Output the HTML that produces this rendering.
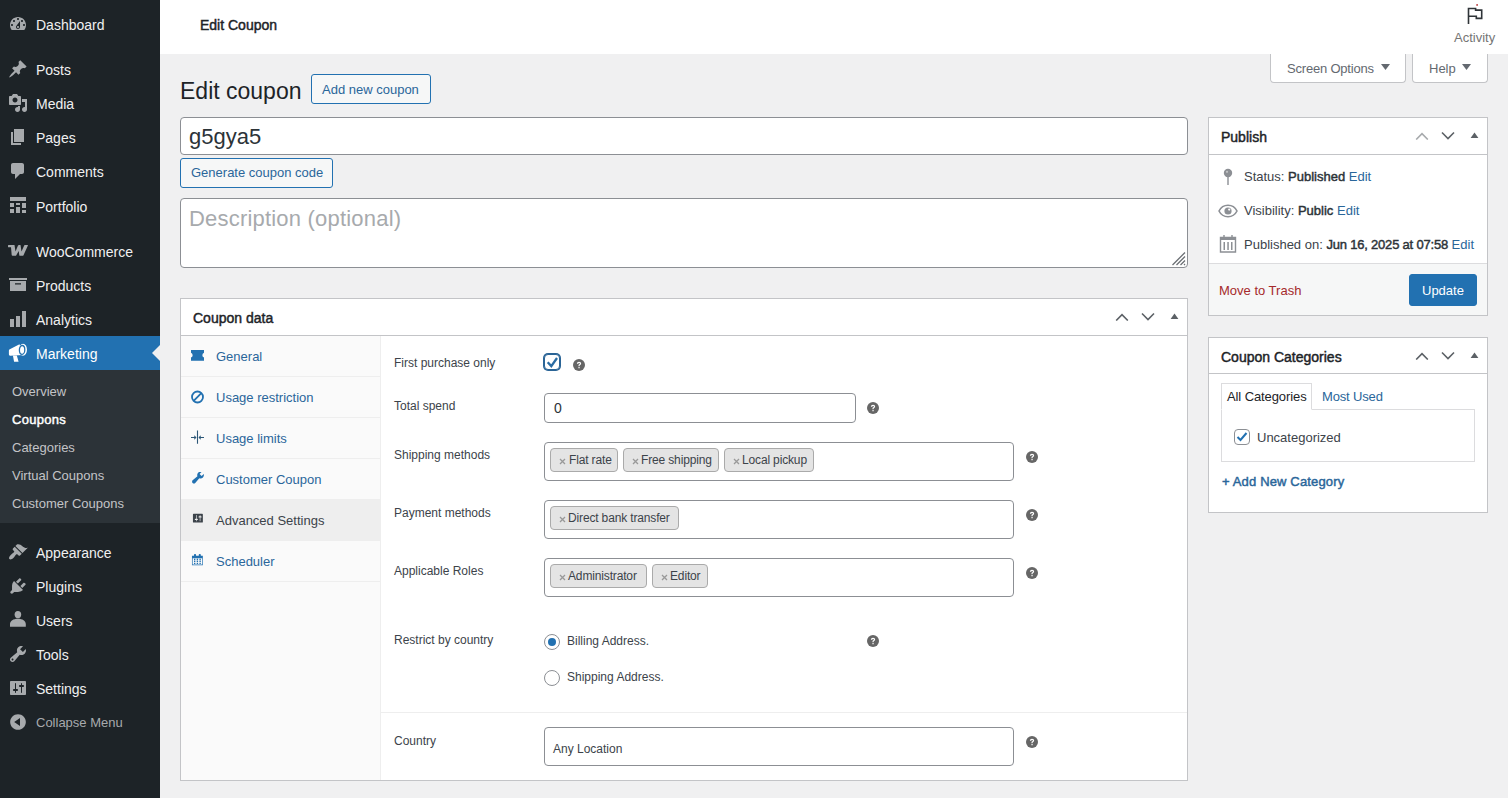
<!DOCTYPE html>
<html><head><meta charset="utf-8">
<style>
*{box-sizing:border-box;margin:0;padding:0}
html,body{width:1508px;height:798px;overflow:hidden;background:#f0f0f1;font-family:"Liberation Sans",sans-serif;color:#3c434a;font-size:13px}
.abs{position:absolute;white-space:nowrap}
#side{position:absolute;left:0;top:0;width:160px;height:798px;background:#1d2327}
.mi{position:absolute;left:0;width:160px;height:34px;color:#f0f0f1;font-size:14px;line-height:34px}
.mi span{position:absolute;left:36px;top:1px;white-space:nowrap}
.mi svg{position:absolute;left:8px;top:7px;width:20px;height:20px;fill:#a7aaad}
.mi.cur{background:#2271b1;color:#fff}
.mi.cur svg{fill:#fff}
#sub{position:absolute;left:0;top:370px;width:160px;height:153px;background:#2c3338}
.si{position:absolute;left:12px;font-size:13px;color:#c3c4c7;line-height:18px;white-space:nowrap}
#hdr{position:absolute;left:160px;top:0;width:1348px;height:54px;background:#fff}
a{color:#2a669a;text-decoration:none}
.btn2{position:absolute;border:1px solid #2271b1;border-radius:3px;background:#f6f7f7;color:#2a669a;font-size:13px;white-space:nowrap}
.btn2 span{position:absolute}
.inp{position:absolute;border:1px solid #8c8f94;border-radius:4px;background:#fff}
.pbox{position:absolute;border:1px solid #c3c4c7;background:#fff}
.pbox .ph{position:absolute;left:0;top:0;right:0;border-bottom:1px solid #c3c4c7}
.ptitle{position:absolute;font-size:14px;font-weight:normal;color:#1d2327;white-space:nowrap;-webkit-text-stroke:0.45px #1d2327}
.lbl{position:absolute;left:394px;font-size:12px;color:#3c434a;white-space:nowrap}
.help{position:absolute;width:12px;height:12px;margin:0.5px 0 0 0.5px}
.chip{position:absolute;height:24px;background:#e4e4e4;border:1px solid #aaa;border-radius:4px}
.chip i{position:absolute;top:6px;width:7px;height:7px}
.chip span{position:absolute;top:4px;font-size:12px;color:#3c434a;white-space:nowrap;letter-spacing:-0.15px}
.tab{position:absolute;left:181px;width:199px;height:41px;border-bottom:1px solid #eee;font-size:13px}
.tab span{position:absolute;left:35px;top:13px;color:#2a669a;white-space:nowrap}
.tab svg{position:absolute;left:10px;top:13px;width:14px;height:14px;fill:#2271b1}
.arr{position:absolute;width:14px;height:9px}
b{font-weight:normal;color:#2c3338;-webkit-text-stroke:0.45px #2c3338}
</style></head><body>

<div id="side">
  <div class="mi" style="top:7px"><svg viewBox="0 0 20 20"><path d="M3.76 16h12.48c1.1-1.37 1.76-3.11 1.76-5 0-4.42-3.58-8-8-8s-8 3.58-8 8c0 1.89.66 3.63 1.76 5zM10 4c.55 0 1 .45 1 1s-.45 1-1 1-1-.45-1-1 .45-1 1-1zM6 6c.55 0 1 .45 1 1s-.45 1-1 1-1-.45-1-1 .45-1 1-1zm8 0c.55 0 1 .45 1 1s-.45 1-1 1-1-.45-1-1 .45-1 1-1zm-5.37 5.55L12 7v6c0 1.1-.9 2-2 2s-2-.9-2-2c0-.57.24-1.08.63-1.45zM4 10c.55 0 1 .45 1 1s-.45 1-1 1-1-.45-1-1 .45-1 1-1zm12 0c.55 0 1 .45 1 1s-.45 1-1 1-1-.45-1-1 .45-1 1-1zm-5 3c0-.55-.45-1-1-1s-1 .45-1 1 .45 1 1 1 1-.45 1-1z"/></svg><span>Dashboard</span></div>
  <div class="mi" style="top:52px"><svg viewBox="0 0 20 20"><path d="M10.44 3.02l1.82-1.82 6.36 6.35-1.83 1.82c-1.05-.68-2.48-.57-3.410.36l-.75.75c-.92.93-1.04 2.35-.35 3.41l-1.83 1.82-2.41-2.41-2.8 2.79c-.42.42-3.38 2.71-3.8 2.29s1.86-3.39 2.28-3.81l2.79-2.79L4.1 9.36l1.83-1.82c1.05.69 2.48.57 3.4-.36l.75-.75c.93-.92 1.05-2.35.36-3.41z"/></svg><span>Posts</span></div>
  <div class="mi" style="top:86px"><svg viewBox="0 0 20 20"><path d="M13 11V4c0-.55-.45-1-1-1h-1.67L9 1H5L3.67 3H2c-.55 0-1 .45-1 1v7c0 .55.45 1 1 1h10c.55 0 1-.45 1-1zM7 4.5c1.38 0 2.5 1.12 2.5 2.5S8.38 9.5 7 9.5 4.5 8.38 4.5 7 5.62 4.5 7 4.5zM14 6h5v10.5c0 1.38-1.12 2.5-2.5 2.5S14 17.88 14 16.5s1.12-2.5 2.5-2.5c.17 0 .34.02.5.05V9h-3V6zm-4 8.05V13h2v3.5c0 1.38-1.12 2.5-2.5 2.5S7 17.88 7 16.5 8.12 14 9.5 14c.17 0 .34.02.5.05z"/></svg><span>Media</span></div>
  <div class="mi" style="top:120px"><svg viewBox="0 0 20 20"><path d="M6 15V2h10v13H6zm-1 1h8v2H3V5h2v11z"/></svg><span>Pages</span></div>
  <div class="mi" style="top:154px"><svg viewBox="0 0 20 20"><path d="M5 2h9c1.1 0 2 .9 2 2v7c0 1.1-.9 2-2 2h-2l-5 5v-5H5c-1.1 0-2-.9-2-2V4c0-1.1.9-2 2-2z"/></svg><span>Comments</span></div>
  <div class="mi" style="top:189px"><svg viewBox="0 0 20 20"><path d="M2 1h16v4H2zM2 7h4v4H2zm0 6h4v4H2zM8 7h4v2H8zm0 4h4v6H8zM14 7h4v5h-4zm0 7h4v3h-4z"/></svg><span>Portfolio</span></div>
  <div class="mi" style="top:234px"><svg viewBox="0 0 20 20"><path d="M0 4.500Q0 3.900 .600 3.900H6.500L7.500 10.500L10 4.500Q10.300 3.900 11 3.900H12.500L13.500 10.500L16.300 4.300Q16.500 3.900 17 3.900H19.500Q20.200 3.900 19.900 4.600L15.500 14.200Q15.200 14.800 14.500 14.800H12Q11.400 14.800 11.300 14.200L10.700 10L8.300 14.200Q8 14.800 7.300 14.800H4.600Q3.800 14.800 3.700 14L3 6.300H.600Q0 6.300 0 5.700Z"/></svg><span>WooCommerce</span></div>
  <div class="mi" style="top:268px"><svg viewBox="0 0 20 20" style="fill-rule:evenodd"><path d="M1 3h18v2H1zM2 6h16v10H2zM7 8.3v1.2h6V8.300z"/></svg><span>Products</span></div>
  <div class="mi" style="top:302px"><svg viewBox="0 0 20 20"><path d="M2 10h4v8H2zM8 7h4v11H8zM14 2h4v16h-4z"/></svg><span>Analytics</span></div>
  <div class="mi cur" style="top:336px"><svg viewBox="0 0 20 20"><path d="M1.800 6.300L11.500 1.300L14.800 12.100L2.200 12.700C1.200 12.700 .900 12 .900 11V7.600C.900 7 1.200 6.600 1.800 6.300Z"/><path d="M4.900 12.500H8.800L10.600 18.800H6.100Z"/><ellipse cx="15" cy="6.800" rx="4" ry="6"/><ellipse cx="14.100" cy="6.900" rx="2.700" ry="4.400" fill="#fff" stroke="#2271b1" stroke-width="1.300"/></svg><span>Marketing</span></div>
  <div class="abs" style="left:152px;top:345px;width:0;height:0;border-top:8px solid transparent;border-bottom:8px solid transparent;border-right:8px solid #f0f0f1"></div>
  <div id="sub"></div>
  <div class="si" style="top:383px">Overview</div>
  <div class="si" style="top:411px;color:#fff;letter-spacing:0.3px;-webkit-text-stroke:0.45px #fff">Coupons</div>
  <div class="si" style="top:439px">Categories</div>
  <div class="si" style="top:467px">Virtual Coupons</div>
  <div class="si" style="top:495px">Customer Coupons</div>
  <div class="mi" style="top:535px"><svg viewBox="0 0 20 20"><path d="M14.48 11.06L7.41 3.99l1.5-1.5c.5-.56 2.3-.47 3.51.32 1.21.8 1.43 1.28 2.91 2.1 1.18.64 2.45 1.26 4.45.85zm-.71.71L6.7 4.7 4.93 6.47c-.39.39-.39 1.02 0 1.41l1.06 1.06c.39.39.39 1.03 0 1.42-.6.6-1.43 1.11-2.21 1.69-.35.26-.7.53-1.01.84C1.43 14.23.4 16.08 1.4 17.07c.99 1 2.84-.03 4.18-1.36.31-.31.58-.66.85-1.02.57-.78 1.08-1.610 1.69-2.21.39-.39 1.02-.39 1.41 0l1.06 1.06c.39.39 1.02.39 1.41 0z"/></svg><span>Appearance</span></div>
  <div class="mi" style="top:569px"><svg viewBox="0 0 20 20"><path d="M13.11 4.36L9.87 7.6 8 5.73l3.24-3.24c.35-.34 1.05-.2 1.56.32.52.51.66 1.21.31 1.55zm-8 1.77l.91-1.12 9.01 9.01-1.19.84c-.71.71-2.63 1.16-3.82 1.16H6.14L4.9 17.26c-.59.59-1.54.59-2.12 0-.59-.58-.59-1.53 0-2.12l1.24-1.24v-3.88c0-1.13.4-3.19 1.09-3.89zm7.26 3.97l3.24-3.24c.34-.35 1.04-.21 1.55.31.52.51.66 1.21.31 1.55l-3.24 3.25z"/></svg><span>Plugins</span></div>
  <div class="mi" style="top:603px"><svg viewBox="0 0 20 20"><ellipse cx="9.900" cy="4.600" rx="3.300" ry="3.700"/><path d="M2 16.700V14.300C2 11 5.300 8.800 9.900 8.800s7.900 2.200 7.900 5.500v2.400z"/></svg><span>Users</span></div>
  <div class="mi" style="top:637px"><svg viewBox="0 0 20 20"><path d="M16.68 9.77c-1.34 1.34-3.3 1.67-4.95.99l-5.41 6.52c-.99.99-2.59.99-3.58 0s-.99-2.59 0-3.57l6.52-5.42c-.68-1.65-.35-3.61.99-4.95 1.28-1.28 3.12-1.62 4.72-1.06l-2.89 2.89 2.82 2.82 2.86-2.87c.53 1.58.18 3.39-1.08 4.65zM3.81 16.21c.4.39 1.04.39 1.43 0 .4-.4.4-1.04 0-1.43-.39-.4-1.03-.4-1.43 0-.39.39-.39 1.03 0 1.43z"/></svg><span>Tools</span></div>
  <div class="mi" style="top:671px"><svg viewBox="0 0 20 20"><path d="M18 16V4c0-.55-.45-1-1-1H3c-.55 0-1 .45-1 1v12c0 .55.45 1 1 1h14c.55 0 1-.45 1-1zM8 11h1c.55 0 1 .45 1 1s-.45 1-1 1H8v1.5c0 .28-.22.5-.5.5s-.5-.22-.5-.5V13H6c-.55 0-1-.45-1-1s.45-1 1-1h1V5.5c0-.28.22-.5.5-.5s.5.22.5.5V11zm5-2h-1c-.55 0-1-.45-1-1s.45-1 1-1h1V5.5c0-.28.22-.5.5-.5s.5.22.5.5V7h1c.55 0 1 .45 1 1s-.45 1-1 1h-1v5.5c0 .28-.22.5-.5.5s-.5-.22-.5-.5V9z"/></svg><span>Settings</span></div>
  <div class="mi" style="top:705px;color:#a7aaad;font-size:13px"><svg viewBox="0 0 20 20"><path d="M10 2.16c4.33 0 7.84 3.51 7.84 7.84s-3.51 7.84-7.84 7.84S2.16 14.33 2.16 10 5.71 2.16 10 2.16zm2 11.72V6.12L6.18 9.97z"/></svg><span>Collapse Menu</span></div>
</div>

<div id="hdr">
  <div class="abs" style="left:40px;top:17px;font-size:14px;color:#1d2327;-webkit-text-stroke:0.45px #1d2327">Edit Coupon</div>
  <svg class="abs" style="left:1306px;top:4px" width="18" height="22" viewBox="0 0 18 22"><path d="M2.500 20.100V4.500h7.100v1.600h6.100v8.300h-5.400v-2.100H2.500" fill="none" stroke="#2f3438" stroke-width="1.600"/><circle cx="11.100" cy="0.900" r="0.900" fill="#b32d2e"/></svg>
  <div class="abs" style="left:1294px;top:30px;font-size:13px;color:#757575">Activity</div>
</div>

<!-- screen options tabs -->
<div class="abs" style="left:1270px;top:54px;width:136px;height:29px;background:#fff;border:1px solid #c3c4c7;border-top:none;border-radius:0 0 4px 4px"></div>
<div class="abs" style="left:1287px;top:61px;font-size:13px;color:#646970;letter-spacing:-0.2px">Screen Options</div>
<svg class="abs" style="left:1381px;top:64px" width="9" height="6" viewBox="0 0 9 6"><path d="M0 0h9L4.5 6z" fill="#646970"/></svg>
<div class="abs" style="left:1412px;top:54px;width:76px;height:29px;background:#fff;border:1px solid #c3c4c7;border-top:none;border-radius:0 0 4px 4px"></div>
<div class="abs" style="left:1429px;top:61px;font-size:13px;color:#646970">Help</div>
<svg class="abs" style="left:1462px;top:64px" width="9" height="6" viewBox="0 0 9 6"><path d="M0 0h9L4.5 6z" fill="#646970"/></svg>

<div class="abs" style="left:180px;top:78px;font-size:23px;color:#1d2327">Edit coupon</div>
<div class="btn2" style="left:311px;top:74px;width:120px;height:30px"><span style="left:10px;top:7px">Add new coupon</span></div>

<div class="inp" style="left:180px;top:117px;width:1008px;height:38px"><div class="abs" style="left:8px;top:6px;font-size:22px;color:#2c3338">g5gya5</div></div>
<div class="btn2" style="left:180px;top:158px;width:153px;height:30px"><span style="left:10px;top:6px">Generate coupon code</span></div>
<div class="inp" style="left:180px;top:198px;width:1008px;height:70px"><div class="abs" style="left:8px;top:7px;font-size:22px;color:#a7aaad;letter-spacing:0.2px">Description (optional)</div>
<svg class="abs" style="left:990px;top:52px" width="15" height="15" viewBox="0 0 15 15"><path d="M1.5 14L14 1.5M5.5 14L14 5.5M9.5 14L14 9.5M13 14L14 13" stroke="#6c7075" stroke-width="1.3"/></svg></div>

<!-- coupon data box -->
<div class="pbox" style="left:180px;top:298px;width:1008px;height:483px">
  <div class="ph" style="height:37px"></div>
</div>
<div class="ptitle" style="left:193px;top:310px">Coupon data</div>
<svg class="arr" style="left:1115px;top:312px" viewBox="0 0 14 9"><path d="M1.200 8.500l5.800-5.800 5.800 5.800" fill="none" stroke="#5c6166" stroke-width="1.600"/></svg>
<svg class="arr" style="left:1141px;top:312px" viewBox="0 0 14 9"><path d="M1 1.500l6 6 6-6" fill="none" stroke="#5c6166" stroke-width="1.600"/></svg>
<svg class="abs" style="left:1170px;top:313px" width="9" height="6" viewBox="0 0 9 6"><path d="M.600 6h7.800L4.500 .400z" fill="#5c6166"/></svg>
<div class="abs" style="left:181px;top:336px;width:200px;height:444px;background:#fafafa;border-right:1px solid #eee"></div>
<div class="tab" style="top:336px"><svg viewBox="0 0 14 14"><path d="M0 .900h13v2.900a2.500 2.500 0 0 0 0 4.700v3.200H0V8.500a2.500 2.500 0 0 0 0-4.700z"/></svg><span>General</span></div>
<div class="tab" style="top:377px"><svg viewBox="0 0 14 14"><circle cx="6.500" cy="7" r="5.500" fill="none" stroke="#2271b1" stroke-width="1.800"/><path d="M10.300 3.200L2.700 10.800" stroke="#2271b1" stroke-width="1.800"/></svg><span>Usage restriction</span></div>
<div class="tab" style="top:418px"><svg viewBox="0 0 14 14" style="overflow:visible"><path d="M6.500 -.500v13.200M0 6.500h5M13 6.500H8" stroke="#2c5777" stroke-width="1.100" fill="none"/><path d="M5.500 6.500L3.300 4.300V8.700zM7.500 6.500L9.700 4.300V8.700z" fill="#2c5777"/></svg><span>Usage limits</span></div>
<div class="tab" style="top:459px"><svg viewBox="0 0 14 14"><g transform="translate(-.400 -1.800) scale(.74)"><path d="M16.680 9.770c-1.340 1.340-3.300 1.670-4.950.990l-5.410 6.520c-.990.990-2.590.990-3.580 0s-.990-2.590 0-3.570l6.520-5.420c-.680-1.650-.350-3.610.990-4.950 1.280-1.280 3.120-1.620 4.720-1.060l-2.890 2.890 2.820 2.820 2.860-2.870c.530 1.580.180 3.390-1.080 4.650z"/></g></svg><span>Customer Coupon</span></div>
<div class="tab" style="top:500px;background:#eee"><svg viewBox="0 0 14 14" style="fill:#3c434a"><g transform="translate(.700 -1) scale(.62)"><path d="M18 16V4c0-.55-.45-1-1-1H3c-.55 0-1 .45-1 1v12c0 .55.45 1 1 1h14c.55 0 1-.45 1-1zM8 11h1c.55 0 1 .45 1 1s-.45 1-1 1H8v1.5c0 .28-.22.5-.5.5s-.5-.22-.5-.5V13H6c-.55 0-1-.45-1-1s.45-1 1-1h1V5.5c0-.28.22-.5.5-.5s.5.22.5.5V11zm5-2h-1c-.55 0-1-.45-1-1s.45-1 1-1h1V5.5c0-.28.22-.5.5-.5s.5.22.5.5V7h1c.55 0 1 .45 1 1s-.45 1-1 1h-1v5.5c0 .28-.22.5-.5.5s-.5-.22-.5-.5V9z"/></g></svg><span style="color:#3c434a">Advanced Settings</span></div>
<div class="tab" style="top:541px"><svg viewBox="0 0 14 14"><g transform="translate(-.400 -.900) scale(.68 .64)"><path d="M15 4h3v15H2V4h3V3c0-.41.15-.76.44-1.060.29-.29.65-.44 1.060-.44s.77.15 1.060.44c.29.3.44.65.44 1.060v1h4V3c0-.41.15-.76.44-1.060.29-.29.65-.44 1.060-.44s.77.15 1.060.44c.29.3.44.65.44 1.060v1zm2 14V8H3v10h14zM7 9v2H5V9h2zm2 0h2v2H9V9zm4 2V9h2v2h-2zm-6 1v2H5v-2h2zm2 0h2v2H9v-2zm4 2v-2h2v2h-2zm-6 1v2H5v-2h2zm4 2H9v-2h2v2zm4 0h-2v-2h2v2z"/></g></svg><span>Scheduler</span></div>

<svg width="0" height="0" style="position:absolute"><defs>
<symbol id="hq" viewBox="0 0 13 13"><circle cx="6.5" cy="6.5" r="6.5" fill="#666"/><path d="M4.2 5.1c0-1.4 1-2.2 2.3-2.2 1.4 0 2.3.8 2.3 1.9 0 .9-.5 1.3-1.1 1.7-.4.3-.6.5-.6 1v.3H5.9v-.4c0-.8.3-1.2.9-1.6.5-.3.7-.5.7-.9s-.4-.7-.9-.7c-.6 0-1 .4-1 .9zM5.9 8.6h1.3V10H5.9z" fill="#fff"/></symbol>
<symbol id="x" viewBox="0 0 7 7"><path d="M1 1l5 5M6 1L1 6" stroke="#999" stroke-width="1.3"/></symbol>
</defs></svg>

<div class="lbl" style="top:356px">First purchase only</div>
<div class="abs" style="left:544px;top:354px;width:16px;height:16px;border:1px solid #2a6496;border-radius:4px;background:#fff;box-shadow:0 0 0 1px #2a6496"><svg class="abs" style="left:-1px;top:-1px" width="16" height="16" viewBox="0 0 16 16"><path d="M3.700 8.200L7.300 12.100L13 4" fill="none" stroke="#2a6ca3" stroke-width="2.300"/></svg></div>
<svg class="help" style="left:572px;top:358px"><use href="#hq"/></svg>

<div class="lbl" style="top:399px">Total spend</div>
<div class="inp" style="left:544px;top:393px;width:312px;height:30px"><div class="abs" style="left:9px;top:6px;font-size:14px;color:#2c3338">0</div></div>
<svg class="help" style="left:866px;top:401px"><use href="#hq"/></svg>

<div class="lbl" style="top:448px">Shipping methods</div>
<div class="inp" style="left:544px;top:442px;width:470px;height:39px"></div>
<div class="chip" style="left:550px;top:448px;width:68px"><svg class="abs" style="left:8px;top:9px" width="7" height="7"><use href="#x"/></svg><span style="left:18px">Flat rate</span></div>
<div class="chip" style="left:623px;top:448px;width:96px"><svg class="abs" style="left:8px;top:9px" width="7" height="7"><use href="#x"/></svg><span style="left:17px">Free shipping</span></div>
<div class="chip" style="left:724px;top:448px;width:90px"><svg class="abs" style="left:8px;top:9px" width="7" height="7"><use href="#x"/></svg><span style="left:17px">Local pickup</span></div>
<svg class="help" style="left:1025px;top:450px"><use href="#hq"/></svg>

<div class="lbl" style="top:506px">Payment methods</div>
<div class="inp" style="left:544px;top:500px;width:470px;height:39px"></div>
<div class="chip" style="left:550px;top:506px;width:129px"><svg class="abs" style="left:8px;top:9px" width="7" height="7"><use href="#x"/></svg><span style="left:17px">Direct bank transfer</span></div>
<svg class="help" style="left:1025px;top:508px"><use href="#hq"/></svg>

<div class="lbl" style="top:564px">Applicable Roles</div>
<div class="inp" style="left:544px;top:558px;width:470px;height:39px"></div>
<div class="chip" style="left:550px;top:564px;width:97px"><svg class="abs" style="left:8px;top:9px" width="7" height="7"><use href="#x"/></svg><span style="left:17px">Administrator</span></div>
<div class="chip" style="left:652px;top:564px;width:56px"><svg class="abs" style="left:8px;top:9px" width="7" height="7"><use href="#x"/></svg><span style="left:17px">Editor</span></div>
<svg class="help" style="left:1025px;top:566px"><use href="#hq"/></svg>

<div class="lbl" style="top:633px">Restrict by country</div>
<div class="abs" style="left:544px;top:634px;width:16px;height:16px;border:1px solid #8c8f94;border-radius:50%;background:#fff"><div class="abs" style="left:3px;top:3px;width:8px;height:8px;border-radius:50%;background:#2271b1"></div></div>
<div class="abs" style="left:567px;top:634px;font-size:12px">Billing Address.</div>
<svg class="help" style="left:866px;top:634px"><use href="#hq"/></svg>
<div class="abs" style="left:544px;top:670px;width:16px;height:16px;border:1px solid #8c8f94;border-radius:50%;background:#fff"></div>
<div class="abs" style="left:567px;top:670px;font-size:12px">Shipping Address.</div>

<div class="abs" style="left:381px;top:712px;width:806px;height:1px;background:#eee"></div>
<div class="lbl" style="top:734px">Country</div>
<div class="inp" style="left:544px;top:727px;width:470px;height:39px"><div class="abs" style="left:8px;top:14px;font-size:12px;color:#3c434a">Any Location</div></div>
<svg class="help" style="left:1025px;top:735px"><use href="#hq"/></svg>

<!-- publish box -->
<div class="pbox" style="left:1208px;top:117px;width:280px;height:199px"><div class="ph" style="height:37px"></div></div>
<div class="ptitle" style="left:1221px;top:129px">Publish</div>
<svg class="arr" style="left:1415px;top:131px" viewBox="0 0 14 9"><path d="M1.200 8.500l5.800-5.800 5.800 5.800" fill="none" stroke="#a7aaad" stroke-width="1.600"/></svg>
<svg class="arr" style="left:1441px;top:131px" viewBox="0 0 14 9"><path d="M1 1.500l6 6 6-6" fill="none" stroke="#5c6166" stroke-width="1.600"/></svg>
<svg class="abs" style="left:1470px;top:132px" width="9" height="6" viewBox="0 0 9 6"><path d="M.600 6h7.800L4.500 .400z" fill="#5c6166"/></svg>
<div class="abs" style="left:1209px;top:263px;width:278px;height:52px;background:#f6f7f7;border-top:1px solid #dcdcde"></div>
<svg class="abs" style="left:1222px;top:168px" width="12" height="18" viewBox="0 0 12 18"><circle cx="6" cy="5" r="4.2" fill="#8c8f94"/><path d="M5.3 8h1.4v9H5.3z" fill="#8c8f94"/><circle cx="5" cy="3.8" r="1.1" fill="#c3c4c7"/></svg>
<svg class="abs" style="left:1218px;top:204px" width="20" height="14" viewBox="0 0 20 14"><path d="M1 7C3 3 6.300 1.3 10 1.3S17 3 19 7c-2 4-5.3 5.700-9 5.700S3 11 1 7z" fill="none" stroke="#8c8f94" stroke-width="1.6"/><circle cx="10" cy="7" r="3.6" fill="#8c8f94"/><circle cx="11.200" cy="5.6" r="1.1" fill="#fff"/></svg>
<svg class="abs" style="left:1219px;top:234px" width="18" height="19" viewBox="0 0 18 19"><path d="M1.5 3.5h15v14.500h-15z" fill="none" stroke="#8c8f94" stroke-width="1.4"/><path d="M1 3h16v3H1z" fill="#8c8f94"/><path d="M4.300 1h1.400v4H4.300zM12.300 1h1.400v4h-1.400zM4.500 8h1.500v8H4.500zM8.300 8h1.500v8H8.300zM12 8h1.500v8H12z" fill="#8c8f94"/></svg>
<div class="abs" style="left:1244px;top:169px;font-size:13px">Status: <b>Published</b> <a>Edit</a></div>
<div class="abs" style="left:1244px;top:203px;font-size:13px">Visibility: <b>Public</b> <a>Edit</a></div>
<div class="abs" style="left:1244px;top:237px;font-size:13px">Published on: <b style="letter-spacing:-0.2px">Jun 16, 2025 at 07:58</b> <a>Edit</a></div>
<div class="abs" style="left:1219px;top:283px;font-size:13px;color:#a52a2b">Move to Trash</div>
<div class="abs" style="left:1409px;top:274px;width:68px;height:32px;background:#2271b1;border-radius:3px;border:1px solid #2271b1"></div>
<div class="abs" style="left:1422px;top:283px;font-size:13px;color:#fff">Update</div>

<!-- categories box -->
<div class="pbox" style="left:1208px;top:337px;width:280px;height:176px"><div class="ph" style="height:36px"></div></div>
<div class="ptitle" style="left:1221px;top:349px">Coupon Categories</div>
<svg class="arr" style="left:1415px;top:351px" viewBox="0 0 14 9"><path d="M1.200 8.500l5.800-5.800 5.800 5.800" fill="none" stroke="#5c6166" stroke-width="1.600"/></svg>
<svg class="arr" style="left:1441px;top:351px" viewBox="0 0 14 9"><path d="M1 1.500l6 6 6-6" fill="none" stroke="#5c6166" stroke-width="1.600"/></svg>
<svg class="abs" style="left:1470px;top:352px" width="9" height="6" viewBox="0 0 9 6"><path d="M.600 6h7.800L4.500 .400z" fill="#5c6166"/></svg>
<div class="abs" style="left:1221px;top:409px;width:254px;height:53px;border:1px solid #dcdcde;background:#fff"></div>
<div class="abs" style="left:1221px;top:383px;width:91px;height:27px;border:1px solid #dcdcde;border-bottom:1px solid #fff;background:#fff"></div>
<div class="abs" style="left:1227px;top:389px;font-size:13px;color:#1d2327;letter-spacing:-0.1px">All Categories</div>
<div class="abs" style="left:1322px;top:389px;font-size:13px;color:#2a669a;letter-spacing:-0.15px">Most Used</div>
<div class="abs" style="left:1234px;top:429px;width:16px;height:16px;border:1px solid #8c8f94;border-radius:4px;background:#fff"><svg class="abs" style="left:-1px;top:-1px" width="16" height="16" viewBox="0 0 16 16"><path d="M3.5 8l3 3 6-7" fill="none" stroke="#2271b1" stroke-width="2"/></svg></div>
<div class="abs" style="left:1257px;top:430px;font-size:13px">Uncategorized</div>
<div class="abs" style="left:1222px;top:474px;font-size:13px;color:#2a669a;letter-spacing:0.15px;-webkit-text-stroke:0.45px #2a669a">+ Add New Category</div>

</body></html>
